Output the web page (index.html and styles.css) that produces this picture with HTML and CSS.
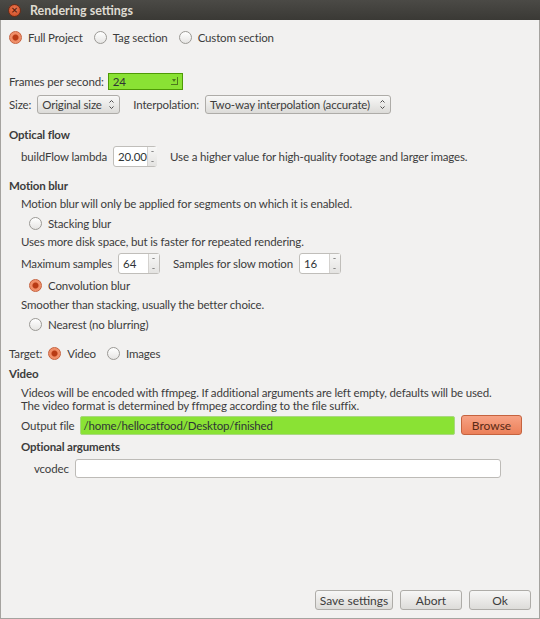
FILE: index.html
```html
<!DOCTYPE html>
<html lang="en">

<head>
  <meta charset="UTF-8">
  <meta name="viewport" content="width=device-width, initial-scale=1.0">
  <title>Rendering settings</title>

  <link rel="stylesheet" href="styles.css">
</head>

<body>
  <div class="window">
    <div class="titlebar">
      <span class="close-btn">&#215;</span>
      <span class="title">Rendering settings</span>
    </div>

    <div class="content">
      <div class="row r-scope">
        <label class="opt"><span class="radio checked"></span>Full Project</label>
        <label class="opt"><span class="radio"></span>Tag section</label>
        <label class="opt"><span class="radio"></span>Custom section</label>
      </div>

      <div class="row r-fps">
        <span>Frames per second:</span>
        <div class="combo-green">24<span class="combo-arrow"></span></div>
      </div>

      <div class="row r-size">
        <span>Size:</span>
        <div class="combo size-combo">Original size
          <svg class="updown" width="5" height="11" viewBox="0 0 5 11"><path d="M0.5 3.5 L2.5 1.5 L4.5 3.5 M0.5 7.5 L2.5 9.5 L4.5 7.5" fill="none" stroke="#4c4c4c" stroke-width="1"/></svg>
        </div>
        <span class="interp-label">Interpolation:</span>
        <div class="combo interp-combo">Two-way interpolation (accurate)
          <svg class="updown" width="5" height="11" viewBox="0 0 5 11"><path d="M0.5 3.5 L2.5 1.5 L4.5 3.5 M0.5 7.5 L2.5 9.5 L4.5 7.5" fill="none" stroke="#4c4c4c" stroke-width="1"/></svg>
        </div>
      </div>

      <div class="heading h-optical">Optical flow</div>
      <div class="row indent r-lambda">
        <span>buildFlow lambda</span>
        <div class="spin lambda-spin"><span class="spin-val">20.00</span><span class="spin-btns"><svg width="9" height="19" viewBox="0 0 9 19"><path d="M3.5 5 L4.5 4 L5.5 5 M3.5 14 L4.5 15 L5.5 14" fill="none" stroke="#6a6a6a" stroke-width="1"/></svg></span></div>
        <span class="hint">Use a higher value for high-quality footage and larger images.</span>
      </div>

      <div class="heading h-motion">Motion blur</div>
      <div class="line indent l-tight">Motion blur will only be applied for segments on which it is enabled.</div>
      <label class="row opt sub r-tight"><span class="radio"></span>Stacking blur</label>
      <div class="line indent l-tight">Uses more disk space, but is faster for repeated rendering.</div>
      <div class="row indent r-samples">
        <span>Maximum samples</span>
        <div class="spin small-spin"><span class="spin-val">64</span><span class="spin-btns"><svg width="9" height="19" viewBox="0 0 9 19"><path d="M3.5 5 L4.5 4 L5.5 5 M3.5 14 L4.5 15 L5.5 14" fill="none" stroke="#6a6a6a" stroke-width="1"/></svg></span></div>
        <span class="slow-label">Samples for slow motion</span>
        <div class="spin small-spin"><span class="spin-val">16</span><span class="spin-btns"><svg width="9" height="19" viewBox="0 0 9 19"><path d="M3.5 5 L4.5 4 L5.5 5 M3.5 14 L4.5 15 L5.5 14" fill="none" stroke="#6a6a6a" stroke-width="1"/></svg></span></div>
      </div>
      <label class="row opt sub r-tight"><span class="radio checked"></span>Convolution blur</label>
      <div class="line indent l-smooth">Smoother than stacking, usually the better choice.</div>
      <label class="row opt sub r-tight"><span class="radio"></span>Nearest (no blurring)</label>

      <div class="row r-target">
        <span class="target-label">Target:</span>
        <label class="opt"><span class="radio checked"></span>Video</label>
        <label class="opt"><span class="radio"></span>Images</label>
      </div>

      <div class="heading h-video">Video</div>
      <div class="para indent">
        <div>Videos will be encoded with ffmpeg. If additional arguments are left empty, defaults will be used.</div>
        <div>The video format is determined by ffmpeg according to the file suffix.</div>
      </div>
      <div class="row indent r-output">
        <span>Output file</span>
        <div class="entry-green">/home/hellocatfood/Desktop/finished</div>
        <button type="button" class="btn btn-orange">Browse</button>
      </div>

      <div class="heading indent h-optional">Optional arguments</div>
      <div class="row r-vcodec">
        <span>vcodec</span>
        <div class="entry"></div>
      </div>
    </div>

    <div class="actions">
      <button type="button" class="btn save-btn">Save settings</button>
      <button type="button" class="btn abort-btn">Abort</button>
      <button type="button" class="btn ok-btn">Ok</button>
    </div>
  </div>
</body>

</html>
```

FILE: styles.css
```css
* {
  box-sizing: border-box;
}

body {
  margin: 0;
  background: #f2f1f0;
  font-family: Lato, "Open Sans", sans-serif;
  font-size: 11.5px;
  letter-spacing: -0.15px;
  color: #3c3c3c;
}

.window {
  width: 540px;
  height: 619px;
  display: flex;
  flex-direction: column;
  background: #f2f1f0;
  border-left: 1px solid #a5a39f;
  border-right: 1px solid #a5a39f;
  border-bottom: 1px solid #a5a39f;
}

.titlebar {
  height: 20px;
  margin: 0 -1px;
  display: flex;
  align-items: center;
  background: linear-gradient(#4b4a46, #3a3935);
  color: #dfdbd2;
  font-weight: bold;
  font-size: 12.5px;
  letter-spacing: 0;
}

.close-btn {
  width: 13px;
  height: 13px;
  margin-left: 8px;
  margin-right: 9px;
  border-radius: 50%;
  background: radial-gradient(circle at 50% 40%, #f07c56, #c8461e);
  border: 1px solid #6d2b15;
  color: #5a1e0c;
  font-size: 11px;
  line-height: 10px;
  text-align: center;
  font-weight: bold;
}

.content {
  flex: 1;
  padding-left: 8px;
  display: flex;
  flex-direction: column;
}

.row {
  display: flex;
  align-items: center;
  white-space: nowrap;
}

.indent {
  padding-left: 12px;
}

.sub {
  padding-left: 20px;
}

.opt {
  display: flex;
  align-items: center;
  margin-right: 11px;
}

.radio {
  width: 13px;
  height: 13px;
  border-radius: 50%;
  border: 1px solid #9b9995;
  background: linear-gradient(#ffffff, #e6e5e3);
  margin-right: 6px;
  flex-shrink: 0;
}

.radio.checked {
  border-color: #c6603c;
  background: radial-gradient(circle, #b83a14 0 2.5px, #ef8a63 3.5px, #f39f7d);
}

.heading {
  font-weight: bold;
  height: 16px;
  line-height: 16px;
}

.line {
  height: 16px;
  line-height: 16px;
}

.para {
  line-height: 13px;
  margin-top: 4px;
  white-space: nowrap;
}

/* vertical rhythm */
.r-scope { height: 18px; margin-top: 8px; }
.r-fps { height: 18px; margin-top: 26px; }
.r-size { height: 20px; margin-top: 4px; }
.h-optical { margin-top: 13px; }
.r-lambda { height: 22px; margin-top: 2px; }
.h-motion { margin-top: 11px; }
.l-tight { margin-top: 2px; }
.r-tight { height: 18px; margin-top: 2px; }
.r-samples { height: 22px; margin-top: 2px; }
.l-smooth { margin-top: 3px; }
.r-target { height: 18px; margin-top: 11px; }
.h-video { margin-top: 4px; }
.r-output { height: 20px; margin-top: 3px; padding-right: 17px; }
.h-optional { margin-top: 4px; }
.r-vcodec { height: 20px; margin-top: 3px; padding-left: 25px; padding-right: 38px; }

.combo-green {
  position: relative;
  width: 75px;
  height: 17px;
  margin-left: 4px;
  padding-left: 4px;
  line-height: 15px;
  background: #8ae234;
  border: 1px solid #4e9a06;
  color: #2e3436;
}

.combo-arrow {
  position: absolute;
  right: 4px;
  top: 3px;
  width: 7px;
  height: 8px;
  border-right: 1px solid #4e7a1e;
  border-bottom: 1px solid #4e7a1e;
}

.combo-arrow::before {
  content: "";
  position: absolute;
  left: 1px;
  top: 2px;
  border-left: 2px solid transparent;
  border-right: 2px solid transparent;
  border-top: 3px solid #4e7a1e;
}

.combo {
  position: relative;
  height: 19px;
  padding-left: 4px;
  line-height: 17px;
  border: 1px solid #aeaca8;
  border-radius: 3px;
  background: linear-gradient(#f8f8f7, #dcdbd8);
  white-space: nowrap;
}

.updown {
  position: absolute;
  right: 5px;
  top: 3px;
}

.size-combo {
  width: 83px;
  margin-left: 6px;
}

.interp-label {
  margin-left: 13px;
}

.interp-combo {
  width: 186px;
  margin-left: 6px;
}

.spin {
  display: flex;
  height: 21px;
  border: 1px solid #c0beba;
  border-radius: 3px;
  background: #ffffff;
  margin-left: 6px;
}

.spin-val {
  flex: 1;
  padding-left: 4px;
  line-height: 19px;
  color: #2e3436;
}

.spin-btns {
  display: flex;
  width: 11px;
  border-left: 1px solid #d4d2cf;
  background: linear-gradient(#f7f7f6, #e4e3e1);
}

.lambda-spin {
  width: 44px;
}

.hint {
  margin-left: 13px;
}

.small-spin {
  width: 42px;
}

.slow-label {
  margin-left: 13px;
}

.target-label {
  margin-right: 6px;
}

.entry-green {
  flex: 1;
  height: 19px;
  margin-left: 5px;
  padding-left: 3px;
  line-height: 17px;
  background: #8ae234;
  border: 1px solid #a9d880;
  border-radius: 2px;
  color: #2e3436;
}

.entry {
  flex: 1;
  height: 19px;
  margin-left: 6px;
  background: #ffffff;
  border: 1px solid #bdbbb7;
  border-radius: 3px;
}

.btn {
  font-family: inherit;
  font-size: 12px;
  letter-spacing: 0;
  color: #3c3c3c;
  height: 20px;
  padding: 0;
  border: 1px solid #aeaca8;
  border-radius: 3px;
  background: linear-gradient(#f7f7f6, #dddcd9);
}

.btn-orange {
  width: 61px;
  margin-left: 6px;
  border-color: #c5633f;
  background: linear-gradient(#f7a284, #ec8059);
  color: #5a2a16;
}

.actions {
  display: flex;
  justify-content: flex-end;
  gap: 7px;
  padding: 0 8px 8px 0;
}

.save-btn {
  width: 78px;
}

.abort-btn {
  width: 62px;
}

.ok-btn {
  width: 62px;
}
```
